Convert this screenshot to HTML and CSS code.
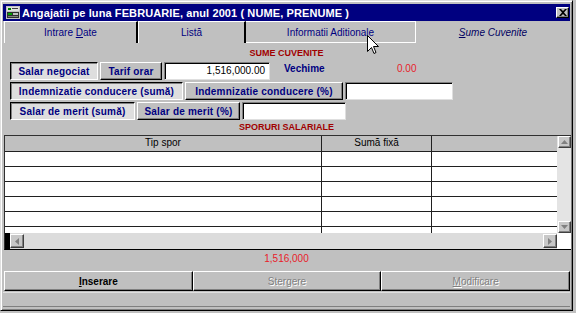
FILE: index.html
```html
<!DOCTYPE html>
<html>
<head>
<meta charset="utf-8">
<link rel="stylesheet" href="styles.css">
</head>
<body>
<div class="window">
  <div class="titlebar">
    <svg class="appicon" width="14" height="13" viewBox="0 0 14 13">
      <rect x="0" y="0" width="14" height="13" fill="#c0c0c0"/>
      <rect x="1" y="1" width="12" height="4" fill="#e0e0e0"/>
      <rect x="2" y="2" width="3" height="2" fill="#008000"/>
      <rect x="6" y="2" width="6" height="1" fill="#404040"/>
      <rect x="1" y="6" width="12" height="6" fill="#303030"/>
      <rect x="2" y="7" width="4" height="2" fill="#00a000"/>
      <rect x="7" y="7" width="5" height="2" fill="#c0c0c0"/>
      <rect x="2" y="10" width="10" height="1" fill="#808080"/>
    </svg>
    <span class="title">Angajatii pe luna FEBRUARIE, anul 2001 ( NUME, PRENUME )</span>
    <span class="close">
      <svg width="8" height="7" viewBox="0 0 8 7"><path d="M0 0h2l2 2 2-2h2L5 3.5 8 7H6L4 5 2 7H0l3-3.5z" fill="#000"/></svg>
    </span>
  </div>
  <div class="tabs">
    <div class="tab t1"><span>Intrare <u>D</u>ate</span></div>
    <div class="tab t2"><span>Listă</span></div>
    <div class="tab t3"><span>Informatii Aditionale</span></div>
    <div class="tab active"><span><u>S</u>ume Cuvenite</span></div>
  </div>
  <div class="panel">
    <div class="section s1">SUME CUVENITE</div>
    <div class="rows">
      <div class="row">
        <div class="pressed w88">Salar negociat</div>
        <div class="btn w62">Tarif orar</div>
        <div class="input w106">1,516,000.00</div>
        <div class="plain vech">Vechime</div>
        <div class="redval">0.00</div>
      </div>
      <div class="row">
        <div class="pressed w173">Indemnizatie conducere (sumă)</div>
        <div class="btn w158">Indemnizatie conducere (%)</div>
        <div class="input w108"></div>
      </div>
      <div class="row">
        <div class="pressed w125">Salar de merit (sumă)</div>
        <div class="btn w103">Salar de merit (%)</div>
        <div class="input w104"></div>
      </div>
    </div>
    <div class="section s2">SPORURI SALARIALE</div>
    <div class="grid">
      <div class="data">
        <div class="gr head">
          <div class="c c1">Tip spor</div>
          <div class="c c2">Sumă fixă</div>
          <div class="c c3"></div>
        </div>
        <div class="gr"><div class="c c1"></div><div class="c c2"></div><div class="c c3"></div></div>
        <div class="gr"><div class="c c1"></div><div class="c c2"></div><div class="c c3"></div></div>
        <div class="gr"><div class="c c1"></div><div class="c c2"></div><div class="c c3"></div></div>
        <div class="gr"><div class="c c1"></div><div class="c c2"></div><div class="c c3"></div></div>
        <div class="gr"><div class="c c1"></div><div class="c c2"></div><div class="c c3"></div></div>
        <div class="gr last"><div class="c c1"></div><div class="c c2"></div><div class="c c3"></div></div>
      </div>
      <div class="vscroll">
        <div class="sbtn"><svg width="7" height="4" viewBox="0 0 7 4"><path d="M3.5 0L7 4H0z" fill="#808080"/></svg></div>
        <div class="track"></div>
        <div class="sbtn"><svg width="7" height="4" viewBox="0 0 7 4"><path d="M0 0h7L3.5 4z" fill="#808080"/></svg></div>
      </div>
      <div class="hscroll">
        <div class="sel"></div>
        <div class="sbtn"><svg width="4" height="7" viewBox="0 0 4 7"><path d="M4 0v7L0 3.5z" fill="#808080"/></svg></div>
        <div class="track"></div>
        <div class="sbtn"><svg width="4" height="7" viewBox="0 0 4 7"><path d="M0 0v7l4-3.5z" fill="#808080"/></svg></div>
      </div>
      <div class="corner"></div>
    </div>
    <div class="total">1,516,000</div>
    <div class="buttons">
      <div class="bbtn bold"><span><u>I</u>nserare</span></div>
      <div class="bbtn dis"><span>Stergere</span></div>
      <div class="bbtn dis"><span><u>M</u>odificare</span></div>
    </div>
    <div class="status"></div>
  </div>
  <svg class="cursor" width="12" height="20" viewBox="0 0 12 20">
    <path d="M0.5 0.5V16.5L4.5 12.5L7 18.5L9 17.5L6.5 11.5H11.5Z" fill="#fff" stroke="#000" stroke-width="1"/>
  </svg>
</div>
</body>
</html>
```

FILE: styles.css
```css
* { box-sizing: border-box; }
body {
  margin: 0;
  width: 576px;
  height: 313px;
  overflow: hidden;
  background: #c0c0c0;
  font-family: "Liberation Sans", Arial, sans-serif;
  font-size: 10px;
}
.window {
  position: relative;
  width: 573px;
  height: 311px;
  border: 1px solid;
  border-color: #dfdfdf #000 #000 #dfdfdf;
  box-shadow: inset 1px 1px #fff, inset -1px -1px #808080;
  padding: 2px;
  display: flex;
  flex-direction: column;
}
.titlebar {
  margin-top: 1px;
  height: 17px;
  background: #000080;
  color: #fff;
  display: flex;
  align-items: center;
  padding: 0 1px 0 3px;
}
.appicon { flex: none; }
.title {
  margin-left: 2px;
  font-size: 11px;
  font-weight: bold;
  letter-spacing: 0.1px;
  white-space: nowrap;
  flex: 1;
}
.close {
  width: 13px;
  height: 11px;
  background: #c0c0c0;
  border: 1px solid;
  border-color: #fff #000 #000 #fff;
  box-shadow: inset -1px -1px #808080;
  display: flex;
  align-items: center;
  justify-content: center;
}
.close svg { display: block; }
.tabs {
  display: flex;
  height: 22px;
  margin-left: 1px;
}
.tab {
  display: flex;
  align-items: center;
  justify-content: center;
  color: #000080;
  font-size: 10px;
  white-space: nowrap;
  border-top: 1px solid #fff;
  border-left: 1px solid #fff;
  border-right: 2px solid #000;
}
.t1 { width: 134px; }
.t2 { width: 108px; }
.t3 { width: 170px; border-right: 1px solid #fff; border-bottom: 1px solid #fff; border-left: none; }
.tab.active {
  flex: 1;
  border: none;
  font-style: italic;
  color: #000060;
}
.panel {
  flex: 1;
  display: flex;
  flex-direction: column;
}
.section {
  text-align: center;
  color: #a00000;
  font-weight: bold;
  font-size: 9px;
}
.s1 { height: 19px; line-height: 21px; }
.s2 { height: 15px; line-height: 14px; }
.rows {
  display: flex;
  flex-direction: column;
  gap: 2px;
  padding-left: 7px;
}
.row {
  display: flex;
  gap: 2px;
  height: 18px;
  align-items: stretch;
}
.pressed, .btn {
  display: flex;
  align-items: center;
  justify-content: center;
  color: #000080;
  font-weight: bold;
  letter-spacing: 0.2px;
  white-space: nowrap;
}
.pressed {
  background: #dedede;
  border: 1px solid;
  border-color: #000 #fff #fff #000;
  box-shadow: inset 1px 1px #808080;
}
.btn {
  background: #c0c0c0;
  border: 1px solid;
  border-color: #fff #000 #000 #fff;
  box-shadow: inset -1px -1px #808080;
}
.input {
  background: #fff;
  border: 1px solid;
  border-color: #808080 #dfdfdf #dfdfdf #808080;
  box-shadow: inset 1px 1px #000;
  text-align: right;
  padding-right: 4px;
  line-height: 16px;
  color: #000;
}
.w88 { width: 88px; }
.w62 { width: 62px; }
.w106 { width: 106px; }
.w173 { width: 173px; }
.w158 { width: 158px; }
.w108 { width: 108px; }
.w125 { width: 125px; }
.w103 { width: 103px; }
.w104 { width: 104px; }
.plain {
  color: #000080;
  font-weight: bold;
  line-height: 14px;
}
.vech { margin-left: 12px; width: 111px; }
.redval { color: #e8202a; line-height: 14px; }
.grid {
  margin-left: 1px;
  width: 567px;
  height: 115px;
  display: grid;
  grid-template-columns: 1fr 14px;
  grid-template-rows: 97px 16px;
  border-top: 1px solid #303030;
  border-left: 1px solid #303030;
  border-bottom: 1px solid #000;
  background: #fff;
}
.data { overflow: hidden; background: #fff; }
.gr {
  display: flex;
  height: 15px;
  border-bottom: 1px solid #202020;
}
.gr.head {
  height: 16px;
  background: #c0c0c0;
}
.gr.last { border-bottom: none; }
.c {
  height: 100%;
  text-align: center;
  line-height: 14px;
  color: #000;
}
.c1 { width: 317px; border-right: 1px solid #202020; }
.c2 { width: 110px; border-right: 1px solid #202020; }
.c3 { flex: 1; }
.vscroll {
  display: flex;
  flex-direction: column;
  background: #e4e4e4;
  padding-left: 1px;
}
.sbtn {
  flex: none;
  width: 13px;
  height: 12px;
  background: #c8c8c8;
  border: 1px solid;
  border-color: #fff #404040 #404040 #fff;
  box-shadow: inset -1px -1px #808080;
  display: flex;
  align-items: center;
  justify-content: center;
}
.sbtn svg { display: block; }
.track { flex: 1; }
.hscroll {
  display: flex;
  align-items: center;
  background: #dcdcdc;
  height: 16px;
}
.hscroll .sel { width: 5px; height: 100%; background: #000; }
.hscroll .sbtn { width: 14px; height: 14px; }
.corner { background: #fff; }
.total {
  height: 18px;
  line-height: 17px;
  text-align: center;
  color: #e8202a;
}
.buttons {
  margin-top: 3px;
  height: 20px;
  display: flex;
  margin-left: 1px;
}
.bbtn {
  flex: 1;
  display: flex;
  align-items: center;
  justify-content: center;
  background: #c0c0c0;
  border: 1px solid;
  border-color: #fff #000 #000 #fff;
  box-shadow: inset -1px -1px #808080;
}
.bold { font-weight: bold; color: #000; }
.dis { color: #808080; text-shadow: 1px 1px #fff; }
.status {
  margin-top: 1px;
  height: 15px;
  border-top: 1px solid #e0e0e0;
  border-bottom: 1px solid #808080;
}
.cursor {
  position: absolute;
  left: 366px;
  top: 34px;
}
```
